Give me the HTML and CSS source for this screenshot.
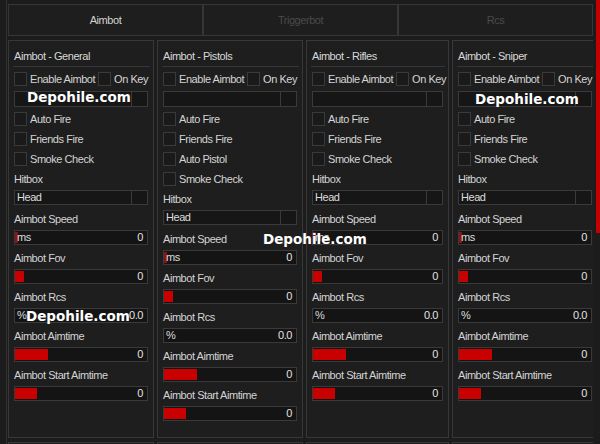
FILE: index.html
```html
<!DOCTYPE html>
<html>
<head>
<meta charset="utf-8">
<link rel="stylesheet" href="styles.css">
</head>
<body>
<div class="app">
  <div class="window">
    <div class="tabs">
      <div class="tab active">Aimbot</div>
      <div class="tab">Triggerbot</div>
      <div class="tab">Rcs</div>
    </div>
    <div class="panels">
      <!-- General -->
      <div class="panel">
        <div class="panel-title">Aimbot - General</div>
        <div class="panel-body">
          <div class="check-row first"><span class="cb"></span><span class="cb-label">Enable Aimbot</span><span class="cb"></span><span class="cb-label">On Key</span></div>
          <div class="combo key"><span class="combo-val"></span><span class="combo-btn"></span></div>
          <div class="check-row"><span class="cb"></span><span class="cb-label">Auto Fire</span></div>
          <div class="check-row"><span class="cb"></span><span class="cb-label">Friends Fire</span></div>
          <div class="check-row"><span class="cb"></span><span class="cb-label">Smoke Check</span></div>
          <div class="field-label first">Hitbox</div>
          <div class="combo"><span class="combo-val">Head</span><span class="combo-btn"></span></div>
          <div class="field-label spaced">Aimbot Speed</div>
          <div class="slider"><span class="fill dim" style="width:3px"></span><span class="unit">ms</span><span class="val">0</span></div>
          <div class="field-label">Aimbot Fov</div>
          <div class="slider"><span class="fill" style="width:9px"></span><span class="val">0</span></div>
          <div class="field-label">Aimbot Rcs</div>
          <div class="slider"><span class="unit">%</span><span class="val">0.0</span></div>
          <div class="field-label">Aimbot Aimtime</div>
          <div class="slider"><span class="fill" style="width:33px"></span><span class="val">0</span></div>
          <div class="field-label">Aimbot Start Aimtime</div>
          <div class="slider"><span class="fill" style="width:22px"></span><span class="val">0</span></div>
        </div>
      </div>
      <!-- Pistols -->
      <div class="panel">
        <div class="panel-title">Aimbot - Pistols</div>
        <div class="panel-body">
          <div class="check-row first"><span class="cb"></span><span class="cb-label">Enable Aimbot</span><span class="cb"></span><span class="cb-label">On Key</span></div>
          <div class="combo key"><span class="combo-val"></span><span class="combo-btn"></span></div>
          <div class="check-row"><span class="cb"></span><span class="cb-label">Auto Fire</span></div>
          <div class="check-row"><span class="cb"></span><span class="cb-label">Friends Fire</span></div>
          <div class="check-row"><span class="cb"></span><span class="cb-label">Auto Pistol</span></div>
          <div class="check-row"><span class="cb"></span><span class="cb-label">Smoke Check</span></div>
          <div class="field-label first">Hitbox</div>
          <div class="combo"><span class="combo-val">Head</span><span class="combo-btn"></span></div>
          <div class="field-label spaced">Aimbot Speed</div>
          <div class="slider"><span class="fill dim" style="width:3px"></span><span class="unit">ms</span><span class="val">0</span></div>
          <div class="field-label">Aimbot Fov</div>
          <div class="slider"><span class="fill" style="width:9px"></span><span class="val">0</span></div>
          <div class="field-label">Aimbot Rcs</div>
          <div class="slider"><span class="unit">%</span><span class="val">0.0</span></div>
          <div class="field-label">Aimbot Aimtime</div>
          <div class="slider"><span class="fill" style="width:33px"></span><span class="val">0</span></div>
          <div class="field-label">Aimbot Start Aimtime</div>
          <div class="slider"><span class="fill" style="width:22px"></span><span class="val">0</span></div>
        </div>
      </div>
      <!-- Rifles -->
      <div class="panel">
        <div class="panel-title">Aimbot - Rifles</div>
        <div class="panel-body">
          <div class="check-row first"><span class="cb"></span><span class="cb-label">Enable Aimbot</span><span class="cb"></span><span class="cb-label">On Key</span></div>
          <div class="combo key"><span class="combo-val"></span><span class="combo-btn"></span></div>
          <div class="check-row"><span class="cb"></span><span class="cb-label">Auto Fire</span></div>
          <div class="check-row"><span class="cb"></span><span class="cb-label">Friends Fire</span></div>
          <div class="check-row"><span class="cb"></span><span class="cb-label">Smoke Check</span></div>
          <div class="field-label first">Hitbox</div>
          <div class="combo"><span class="combo-val">Head</span><span class="combo-btn"></span></div>
          <div class="field-label spaced">Aimbot Speed</div>
          <div class="slider"><span class="fill dim" style="width:3px"></span><span class="unit">ms</span><span class="val">0</span></div>
          <div class="field-label">Aimbot Fov</div>
          <div class="slider"><span class="fill" style="width:9px"></span><span class="val">0</span></div>
          <div class="field-label">Aimbot Rcs</div>
          <div class="slider"><span class="unit">%</span><span class="val">0.0</span></div>
          <div class="field-label">Aimbot Aimtime</div>
          <div class="slider"><span class="fill" style="width:33px"></span><span class="val">0</span></div>
          <div class="field-label">Aimbot Start Aimtime</div>
          <div class="slider"><span class="fill" style="width:22px"></span><span class="val">0</span></div>
        </div>
      </div>
      <!-- Sniper -->
      <div class="panel">
        <div class="panel-title">Aimbot - Sniper</div>
        <div class="panel-body">
          <div class="check-row first"><span class="cb"></span><span class="cb-label">Enable Aimbot</span><span class="cb"></span><span class="cb-label">On Key</span></div>
          <div class="combo key"><span class="combo-val"></span><span class="combo-btn"></span></div>
          <div class="check-row"><span class="cb"></span><span class="cb-label">Auto Fire</span></div>
          <div class="check-row"><span class="cb"></span><span class="cb-label">Friends Fire</span></div>
          <div class="check-row"><span class="cb"></span><span class="cb-label">Smoke Check</span></div>
          <div class="field-label first">Hitbox</div>
          <div class="combo"><span class="combo-val">Head</span><span class="combo-btn"></span></div>
          <div class="field-label spaced">Aimbot Speed</div>
          <div class="slider"><span class="fill dim" style="width:3px"></span><span class="unit">ms</span><span class="val">0</span></div>
          <div class="field-label">Aimbot Fov</div>
          <div class="slider"><span class="fill" style="width:9px"></span><span class="val">0</span></div>
          <div class="field-label">Aimbot Rcs</div>
          <div class="slider"><span class="unit">%</span><span class="val">0.0</span></div>
          <div class="field-label">Aimbot Aimtime</div>
          <div class="slider"><span class="fill" style="width:33px"></span><span class="val">0</span></div>
          <div class="field-label">Aimbot Start Aimtime</div>
          <div class="slider"><span class="fill" style="width:22px"></span><span class="val">0</span></div>
        </div>
      </div>
      <div class="panel"></div>
      <div class="panel"></div>
      <div class="panel"></div>
      <div class="panel"></div>
    </div>
  </div>
  <div class="scrollbar"><div class="thumb"></div></div>

  <div class="watermark wm-1">Depohile.com</div>
  <div class="watermark wm-2">Depohile.com</div>
  <div class="watermark wm-3">Depohile.com</div>
  <div class="watermark wm-4">Depohile.com</div>
</div>
</body>
</html>
```

FILE: styles.css
```css
* { box-sizing: border-box; }
html, body { margin: 0; padding: 0; }
body {
  background: #1c1c1c;
  font-family: "Liberation Sans", Arial, sans-serif;
  font-size: 11px;
  letter-spacing: -0.45px;
  color: #d4d4d4;
  overflow: hidden;
}
.app {
  position: relative;
  display: flex;
  width: 600px;
  height: 444px;
  overflow: hidden;
}
.window {
  margin-left: 6px;
  width: 587px;
  height: 444px;
  border-left: 1px solid #303030;
  padding: 4px 0 0 1px;
  overflow: hidden;
}
.tabs {
  display: grid;
  grid-template-columns: repeat(3, 1fr);
  height: 32px;
}
.tab {
  border: 1px solid #363636;
  background: #1e1e1e;
  color: #4a4a4a;
  display: flex;
  align-items: center;
  justify-content: center;
}
.tab.active { color: #d2d2d2; }
.panels {
  margin-top: 4px;
  display: grid;
  grid-template-columns: 146px 146px 143px 146px;
  grid-auto-rows: 398px;
  column-gap: 3px;
  row-gap: 4px;
  width: 585px;
  overflow: hidden;
}
.panel {
  border: 1px solid #383838;
  background: #1e1e1e;
}
.panel-title {
  margin: 0 3px 0 4px;
  padding: 5px 0 0 1px;
  line-height: 20px;
  height: 26px;
  border-bottom: 1px solid #363636;
  color: #d8d8d8;
}
.panel-body {
  padding: 0 5px;
  display: flex;
  flex-direction: column;
}
.check-row {
  display: flex;
  align-items: center;
  height: 14px;
  margin-top: 6px;
}
.check-row.first { margin-top: 5px; }
.cb {
  width: 13px;
  height: 14px;
  flex: none;
  border: 1px solid #3a3a3a;
  background: #1a1a1a;
}
.cb-label {
  margin: 0 3px 0 3px;
  line-height: 14px;
  white-space: nowrap;
}
.combo {
  display: flex;
  height: 15px;
  border: 1px solid #3a3a3a;
  background: #161616;
}
.combo.key { height: 16px; margin-top: 5px; margin-bottom: -1px; }
.combo-val {
  flex: 1;
  padding-left: 2px;
  line-height: 13px;
  color: #dcdcdc;
}
.combo-btn {
  width: 16px;
  border-left: 1px solid #3a3a3a;
}
.field-label {
  height: 22px;
  line-height: 22px;
  margin-top: 2px;
  white-space: nowrap;
}
.field-label.spaced { margin-top: 3px; }
.slider {
  display: grid;
  grid-template-columns: 1fr auto;
  height: 15px;
  border: 1px solid #3a3a3a;
  background: #141414;
}
.slider > * { grid-row: 1; }
.fill {
  grid-column: 1;
  justify-self: start;
  height: 11px;
  margin: 1px 0 0 0;
  background: #c80000;
}
.fill.dim { background: #8a1414; }
.unit {
  grid-column: 1;
  justify-self: start;
  padding-left: 2px;
  line-height: 13px;
  color: #dcdcdc;
}
.val {
  grid-column: 2;
  padding-right: 4px;
  line-height: 13px;
  color: #e2e2e2;
}
.scrollbar {
  flex: 1;
  display: flex;
  justify-content: flex-end;
}
.thumb {
  width: 4px;
  height: 233px;
  background: #c40000;
}
.watermark {
  position: absolute;
  font-family: "DejaVu Sans", sans-serif;
  font-weight: bold;
  font-size: 13.5px;
  letter-spacing: 0;
  line-height: 16px;
  color: #ffffff;
  white-space: nowrap;
}
.wm-1 { left: 27px; top: 89px; }
.wm-2 { left: 475px; top: 91px; }
.wm-3 { left: 263px; top: 231px; }
.wm-4 { left: 26px; top: 308px; }
```
